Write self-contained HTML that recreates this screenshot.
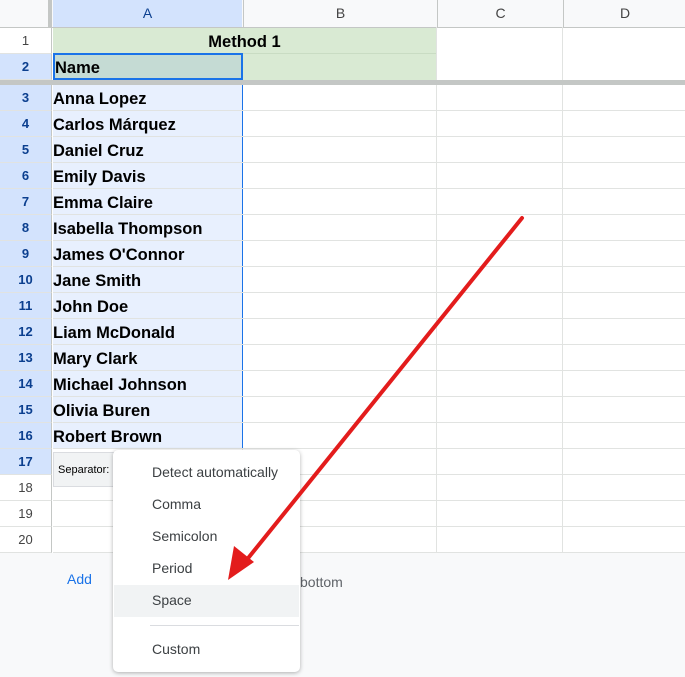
<!DOCTYPE html>
<html><head><style>
body{margin:0;width:685px;height:677px;overflow:hidden;background:#f8f9fa;font-family:"Liberation Sans",Arial,sans-serif;position:relative}
.a{position:absolute}
.rh{position:absolute;left:0;width:52px;text-align:center;font-size:13px;color:#444;border-right:1px solid #c4c7c5;border-bottom:1px solid #e1e3e1;box-sizing:border-box}
.nm{position:absolute;left:53px;font-size:16.5px;font-weight:bold;color:#000}
.mi{position:absolute;left:152px;font-size:14px;color:#3c4043}
</style></head><body>
<div class="a" style="left:0;top:0;width:685px;height:553px;background:#fff"></div>
<div class="a" style="left:0;top:0;width:685px;height:27px;background:#f8f9fa;border-bottom:1px solid #c4c7c5"></div>
<div class="a" style="left:0;top:0;width:48px;height:27px;background:#f8f9fa;border-right:4px solid #c4c7c5"></div>
<div class="a" style="left:53px;top:0;width:189px;height:27px;background:#d3e3fd;text-align:center;line-height:27px;font-size:14px;color:#0b3f8f;border-bottom:1px solid #c4c7c5">A</div>
<div class="a" style="left:243px;top:0;width:193px;height:27px;text-align:center;line-height:27px;font-size:14px;color:#444;border-left:1px solid #c4c7c5">B</div>
<div class="a" style="left:437px;top:0;width:125px;height:27px;text-align:center;line-height:27px;font-size:14px;color:#444;border-left:1px solid #c4c7c5">C</div>
<div class="a" style="left:563px;top:0;width:122px;height:27px;text-align:center;line-height:27px;font-size:14px;color:#444;border-left:1px solid #c4c7c5">D</div>
<div class="a" style="left:436px;top:27px;width:1px;height:526px;background:#e1e3e1"></div>
<div class="a" style="left:562px;top:27px;width:1px;height:526px;background:#e1e3e1"></div>
<div class="a" style="left:242px;top:84px;width:1px;height:469px;background:#e1e3e1"></div>
<div class="a" style="left:53px;top:28px;width:383px;height:52px;background:#d9ead3"></div>
<div class="a" style="left:53px;top:53px;width:383px;height:1px;background:#c9dcc3"></div>
<div class="a" style="left:53px;top:29px;width:383px;height:25px;text-align:center;line-height:26px;font-size:16.5px;font-weight:bold">Method 1</div>
<div class="a" style="left:53px;top:53px;width:186px;height:23px;background:#c5dbd4;border:2px solid #1a73e8;font-size:16.5px;font-weight:bold;line-height:26px">Name</div>
<div class="rh" style="top:28px;height:26px;line-height:26px">1</div>
<div class="rh" style="top:54px;height:26px;line-height:26px;background:#d3e3fd;color:#0b3f8f;font-weight:bold">2</div>
<div class="a" style="left:0;top:80px;width:685px;height:5px;background:#c4c7c5"></div>
<div class="a" style="left:53px;top:85px;width:189px;height:364px;background:#e8f0fe"></div>
<div class="a" style="left:242px;top:85px;width:1px;height:364px;background:#1a73e8"></div>
<div id="rows"></div>
<script>
var names=["Anna Lopez","Carlos Márquez","Daniel Cruz","Emily Davis","Emma Claire","Isabella Thompson","James O'Connor","Jane Smith","John Doe","Liam McDonald","Mary Clark","Michael Johnson","Olivia Buren","Robert Brown"];
var h="";
for(var i=0;i<18;i++){var t=85+i*26;var r=i+3;var sel=r<=17;
h+='<div class="a" style="left:53px;top:'+(t+25)+'px;width:632px;height:1px;background:#e1e3e1"></div>';
h+='<div class="rh" style="top:'+t+'px;height:26px;line-height:26px;'+(sel?'background:#d3e3fd;color:#0b3f8f;font-weight:bold':'background:#fff')+'">'+r+'</div>';
if(i<14)h+='<div class="nm" style="top:'+(t+1)+'px;line-height:26px">'+names[i]+'</div>';}
document.getElementById('rows').innerHTML=h;
</script>
<div class="a" style="left:53px;top:452px;width:70px;height:35px;background:#f1f3f4;border:1px solid #dadce0;font-size:11px;line-height:35px;padding-left:4px;box-sizing:border-box">Separator:</div>
<div class="a" style="left:67px;top:571px;font-size:14px;color:#1a73e8">Add</div>
<div class="a" style="left:300px;top:574px;font-size:14px;color:#5f6368">bottom</div>
<div class="a" style="left:113px;top:450px;width:187px;height:222px;background:#fff;border-radius:5px;box-shadow:0 1px 4px rgba(0,0,0,.3)"></div>
<div class="a" style="left:114px;top:585px;width:185px;height:32px;background:#f1f3f4"></div>
<div class="a" style="left:150px;top:625px;width:149px;height:1px;background:#dadce0"></div>
<div class="mi" style="top:464px">Detect automatically</div>
<div class="mi" style="top:496px">Comma</div>
<div class="mi" style="top:528px">Semicolon</div>
<div class="mi" style="top:560px">Period</div>
<div class="mi" style="top:592px">Space</div>
<div class="mi" style="top:641px">Custom</div>
<svg class="a" style="left:0;top:0" width="685" height="677">
<line x1="522" y1="218" x2="245" y2="562" stroke="#e31c1c" stroke-width="4" stroke-linecap="round"/>
<polygon points="228,580 234,546 254,562" fill="#e31c1c"/>
</svg>
</body></html>
